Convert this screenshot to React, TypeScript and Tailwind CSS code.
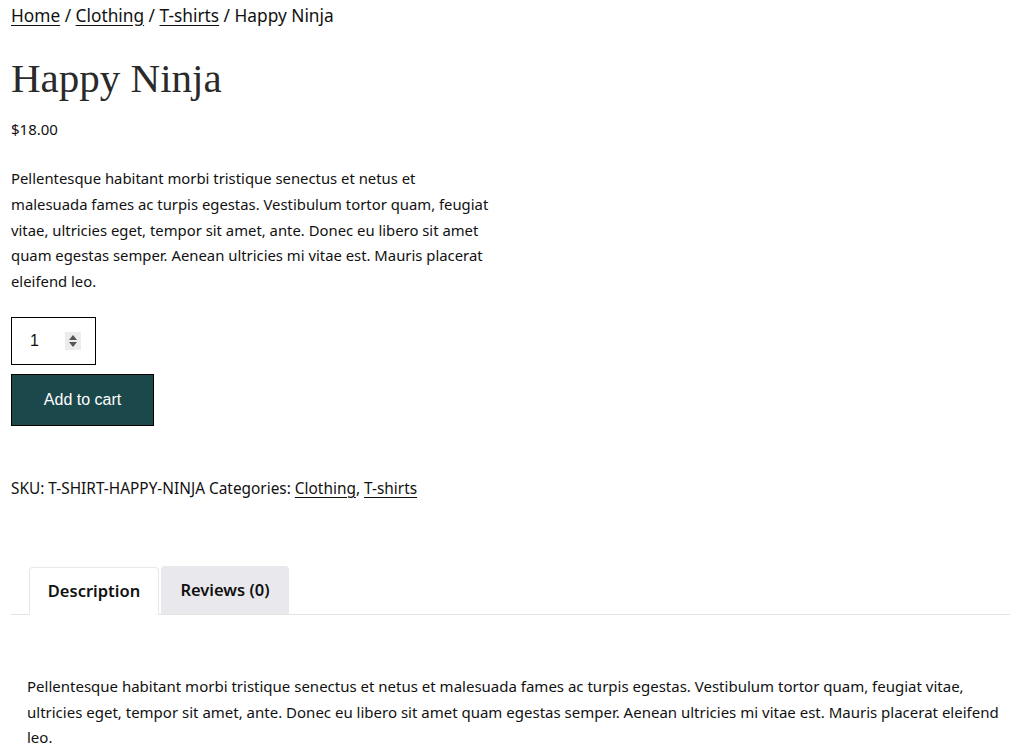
import React from "react";

export default function App() {
  const para =
    "Pellentesque habitant morbi tristique senectus et netus et malesuada fames ac turpis egestas. Vestibulum tortor quam, feugiat vitae, ultricies eget, tempor sit amet, ante. Donec eu libero sit amet quam egestas semper. Aenean ultricies mi vitae est. Mauris placerat eleifend leo.";
  return (
    <div className="bg-white text-[#111] pl-[11px] pr-[7px] w-[1017px] h-[753px] overflow-hidden font-['Noto_Sans',sans-serif]">
      <nav className="text-[17.3px] leading-[32px] text-[#111]">
        <a className="underline underline-offset-[3px]">Home</a> / <a className="underline underline-offset-[3px]">Clothing</a> /{" "}
        <a className="underline underline-offset-[3px]">T-shirts</a> / Happy Ninja
      </nav>
      <h1 className="mt-[22px] text-[41px] leading-[48px] font-['Liberation_Serif',serif] font-normal text-[#2a2a2a]">Happy Ninja</h1>
      <p className="mt-[17px] text-[15px] leading-[20px]">$18.00</p>
      <p className="mt-[27px] w-[500px] text-[14.85px] leading-[25.8px]">
        Pellentesque habitant morbi tristique senectus et netus et
        <br />
        malesuada fames ac turpis egestas. Vestibulum tortor quam, feugiat
        <br />
        vitae, ultricies eget, tempor sit amet, ante. Donec eu libero sit amet
        <br />
        quam egestas semper. Aenean ultricies mi vitae est. Mauris placerat
        <br />
        eleifend leo.
      </p>
      <div className="mt-[22px] flex items-center w-[85px] h-[48px] border border-black">
        <span className="ml-[18px] text-[16px] font-['Liberation_Sans',sans-serif]">1</span>
        <span className="ml-[26px] w-[16px] h-[18px] bg-[#ececec] flex flex-col items-center justify-center gap-[2px]">
          <svg width="8" height="5" viewBox="0 0 8 5"><path d="M0 5 L4 0 L8 5 Z" fill="#555" /></svg>
          <svg width="8" height="5" viewBox="0 0 8 5"><path d="M0 0 L4 5 L8 0 Z" fill="#555" /></svg>
        </span>
      </div>
      <button className="mt-[9px] w-[143px] h-[52px] bg-[#1b484b] border border-black text-white text-[16px] font-['Liberation_Sans',sans-serif] flex items-center justify-center">
        Add to cart
      </button>
      <p className="mt-[52px] text-[15.4px] leading-[22px]">
        SKU: T-SHIRT-HAPPY-NINJA Categories: <a className="underline underline-offset-[3px]">Clothing</a>,{" "}
        <a className="underline underline-offset-[3px]">T-shirts</a>
      </p>
      <div className="mt-[66px] flex items-end border-b border-[#e5e5e5] w-[999px] pl-[18px] gap-[2px]">
        <div className="w-[130px] h-[48px] bg-white border border-b-0 border-[#e8e8e8] rounded-t-[4px] flex items-center justify-center text-[16.5px] font-semibold -mb-px">
          Description
        </div>
        <div className="w-[128px] h-[48px] bg-[#e9e9ed] rounded-t-[4px] flex items-center justify-center text-[16.5px] font-semibold">
          Reviews (0)
        </div>
      </div>
      <p className="mt-[59px] pl-[16px] pr-[8px] text-[15px] leading-[25.6px]">{para}</p>
    </div>
  );
}
